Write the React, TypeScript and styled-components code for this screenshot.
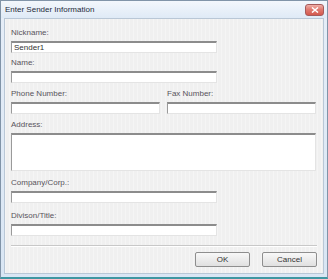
import * as React from 'react';
import styled, { createGlobalStyle } from 'styled-components';

const GlobalStyle = createGlobalStyle`
  html, body {
    margin: 0;
    padding: 0;
    background: #ffffff;
  }
  body {
    font-family: 'Liberation Sans', Arial, sans-serif;
  }
`;

const Window = styled.div`
  width: 328px;
  height: 279px;
  box-sizing: border-box;
  display: flex;
  flex-direction: column;
  background: linear-gradient(180deg, #e6eef8 0%, #d9e6f4 100%);
  border: 1px solid #8194a8;
  border-bottom: 2px solid #3f97a2;
  font-size: 8px;
  color: #333;
`;

const TitleBar = styled.div`
  height: 17px;
  display: flex;
  align-items: center;
  justify-content: space-between;
  padding: 0 3px 0 4px;
  background: linear-gradient(180deg, #f3f7fc 0%, #dfeaf6 100%);
`;

const TitleText = styled.span`
  font-size: 8px;
  color: #1e2b3a;
`;

const CloseButton = styled.div`
  width: 19px;
  height: 12px;
  margin-top: 1px;
  border-radius: 3px;
  border: 1px solid #a55a5a;
  box-sizing: border-box;
  background: linear-gradient(180deg, #f0b0a8 0%, #e07a70 45%, #d4584c 100%);
  display: flex;
  align-items: center;
  justify-content: center;
`;

const Client = styled.div`
  flex: 1;
  margin: 0 3px 3px 3px;
  background-color: #f0f0f0;
  background-image: repeating-linear-gradient(
    90deg,
    rgba(255, 255, 255, 0.35) 0px,
    rgba(255, 255, 255, 0.35) 1px,
    transparent 1px,
    transparent 4px
  );
  border: 1px solid #b9c7d6;
  display: flex;
  flex-direction: column;
  padding: 9px 6px 0 6px;
`;

const Fields = styled.div`
  display: flex;
  flex-direction: column;
`;

const Row = styled.div<{ $top: number }>`
  display: flex;
  gap: 7px;
  margin-top: ${(p) => p.$top}px;
`;

const Field = styled.div<{ $width: number; $top?: number }>`
  display: flex;
  flex-direction: column;
  gap: 3px;
  width: ${(p) => p.$width}px;
  margin-top: ${(p) => p.$top ?? 0}px;
`;

const Label = styled.label`
  height: 10px;
  line-height: 10px;
  font-size: 8px;
  color: #58545c;
`;

const Input = styled.div<{ $height?: number }>`
  box-sizing: border-box;
  height: ${(p) => p.$height ?? 12}px;
  background: #ffffff;
  border-top: 2px solid #8c8c8c;
  border-left: 1px solid #9a9a9a;
  border-right: 1px solid #e4e4e4;
  border-bottom: 1px solid #e4e4e4;
  padding: 0 2px;
  line-height: 9px;
  font-size: 8px;
  color: #333;
`;

const Separator = styled.div`
  margin: 9px 0 0 0;
  height: 0;
  border-top: 1px solid #c8c8c8;
  border-bottom: 1px solid #ffffff;
`;

const Buttons = styled.div`
  display: flex;
  justify-content: flex-end;
  gap: 12px;
  padding: 5px 0 0 0;
`;

const Button = styled.div`
  box-sizing: border-box;
  width: 55px;
  height: 15px;
  display: flex;
  align-items: center;
  justify-content: center;
  background: linear-gradient(180deg, #f8f8f8 0%, #ececec 50%, #e0e0e0 100%);
  border: 1px solid #8e8e8e;
  border-radius: 2px;
  font-size: 8px;
  color: #333;
`;

export default function App() {
  return (
    <>
      <GlobalStyle />
      <Window>
        <TitleBar>
          <TitleText>Enter Sender Information</TitleText>
          <CloseButton>
            <svg width="8" height="6" viewBox="0 0 8 6">
              <path d="M1 0.5 L7 5.5 M7 0.5 L1 5.5" stroke="#ffffff" strokeWidth="1.5" />
            </svg>
          </CloseButton>
        </TitleBar>
        <Client>
          <Fields>
            <Field $width={206}>
              <Label>Nickname:</Label>
              <Input>Sender1</Input>
            </Field>
            <Field $width={206} $top={5}>
              <Label>Name:</Label>
              <Input />
            </Field>
            <Row $top={6}>
              <Field $width={149}>
                <Label>Phone Number:</Label>
                <Input />
              </Field>
              <Field $width={149}>
                <Label>Fax Number:</Label>
                <Input />
              </Field>
            </Row>
            <Field $width={305} $top={6}>
              <Label>Address:</Label>
              <Input $height={38} />
            </Field>
            <Field $width={206} $top={7}>
              <Label>Company/Corp.:</Label>
              <Input />
            </Field>
            <Field $width={206} $top={8}>
              <Label>Divison/Title:</Label>
              <Input />
            </Field>
          </Fields>
          <Separator />
          <Buttons>
            <Button>OK</Button>
            <Button>Cancel</Button>
          </Buttons>
        </Client>
      </Window>
    </>
  );
}
